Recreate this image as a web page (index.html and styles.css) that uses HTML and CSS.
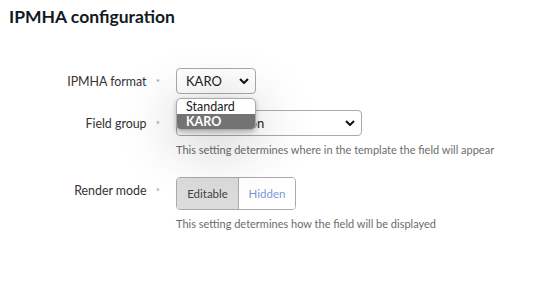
FILE: index.html
```html
<!DOCTYPE html>
<html lang="en">
<head>
  <meta charset="UTF-8">
  <title>IPMHA configuration</title>
  <link rel="stylesheet" href="styles.css">
</head>
<body>

<div class="page">
  <h1 class="title">IPMHA configuration</h1>

  <div class="form">
    <div class="row row-format">
      <div class="label">IPMHA format <span class="req">*</span></div>
      <div class="field">
        <div class="select-wrap">
          <div class="select select-small">
            <span>KARO</span>
            <svg class="chev" viewBox="0 0 10 6" width="10" height="6"><path d="M1 1 L5 5 L9 1" fill="none" stroke="#111" stroke-width="2"/></svg>
          </div>
          <div class="popup">
            <div class="opt">Standard</div>
            <div class="opt opt-active">KARO</div>
          </div>
        </div>
      </div>
    </div>

    <div class="row">
      <div class="label">Field group <span class="req">*</span></div>
      <div class="field">
        <div class="select select-wide">
          <span>Configuration</span>
          <svg class="chev" viewBox="0 0 10 6" width="10" height="6"><path d="M1 1 L5 5 L9 1" fill="none" stroke="#111" stroke-width="2"/></svg>
        </div>
        <p class="help">This setting determines where in the template the field will appear</p>
      </div>
    </div>

    <div class="row row-mode">
      <div class="label">Render mode <span class="req">*</span></div>
      <div class="field">
        <div class="toggle">
          <button class="tbtn tbtn-on">Editable</button>
          <button class="tbtn">Hidden</button>
        </div>
        <p class="help">This setting determines how the field will be displayed</p>
      </div>
    </div>
  </div>
</div>

</body>
</html>
```

FILE: styles.css
```css
body {
  margin: 0;
  background-color: #fff;
  font-family: Lato, "Liberation Sans", sans-serif;
  color: #333;
}

.page {
  padding: 6px 9px;
}

.title {
  margin: 0;
  font-size: 17.5px;
  font-weight: bold;
  color: #111a24;
}

.form {
  margin-top: 41px;
}

.row {
  display: flex;
  align-items: flex-start;
  margin-bottom: 16px;
}

.row-mode {
  margin-top: 21px;
}

.label {
  width: 151px;
  text-align: right;
  font-size: 12.4px;
  padding-top: 6px;
  color: #333;
}

.req {
  color: #999;
  font-size: 10px;
  margin-left: 6px;
}

.field {
  margin-left: 16px;
}

.select-wrap {
  position: relative;
}

.select {
  display: flex;
  justify-content: space-between;
  align-items: center;
  box-sizing: border-box;
  height: 26px;
  padding: 0 6px 0 9px;
  border: 1px solid #aaa;
  border-radius: 4px;
  font-size: 13px;
  color: #222;
  background: #fff;
}

.select-small {
  width: 80px;
}

.select-wide {
  width: 186px;
}

.popup {
  position: absolute;
  left: 0;
  top: 30px;
  width: 80px;
  box-sizing: border-box;
  border: 1px solid #aaa;
  border-radius: 5px;
  background: #fff;
  overflow: hidden;
  box-shadow: 0 10px 60px rgba(0, 0, 0, 0.3), 0 2px 5px rgba(0, 0, 0, 0.25);
  z-index: 10;
}

.opt {
  height: 15px;
  line-height: 15px;
  padding-left: 9px;
  font-size: 12.5px;
  color: #222;
}

.opt-active {
  background: #737373;
  color: #fff;
  font-weight: bold;
}

.help {
  margin: 7px 0 0;
  font-size: 11px;
  color: #6b6b6b;
}

.toggle {
  display: flex;
  width: 120px;
  height: 33px;
  box-sizing: border-box;
  border: 1px solid #aaa;
  border-radius: 4px;
  overflow: hidden;
}

.tbtn {
  border: 0;
  margin: 0;
  font-family: inherit;
  font-size: 11.5px;
  background: #fff;
  color: #7a98d4;
  padding: 0;
}

.tbtn:first-child {
  width: 62px;
  border-right: 1px solid #aaa;
}

.tbtn:last-child {
  flex: 1;
}

.tbtn-on {
  background: #dcdcdc;
  color: #444;
}
```
